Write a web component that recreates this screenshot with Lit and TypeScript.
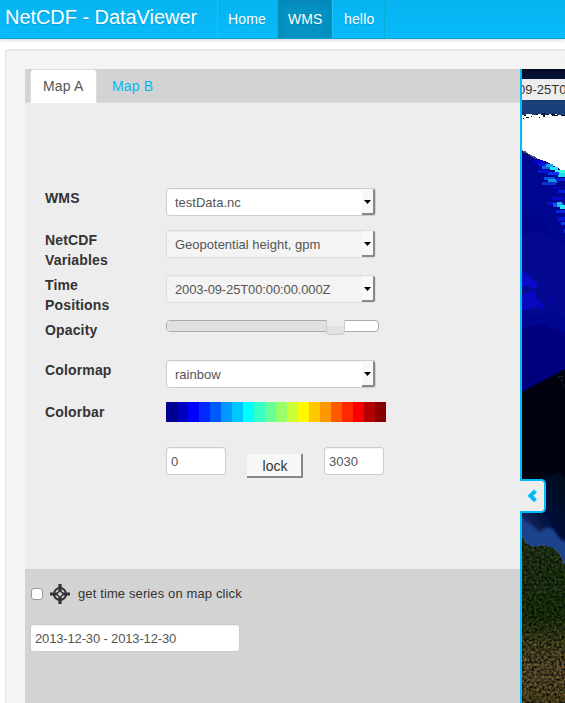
import { LitElement, html, css, svg } from "lit";
import { customElement } from "lit/decorators.js";
import { styleMap } from "lit/directives/style-map.js";

const RAINBOW = [
  "#00008f", "#0000bf", "#0000ff", "#0028ff", "#0058ff", "#0098ff", "#00c8ff",
  "#00ffff", "#38ffc8", "#68ff98", "#98ff68", "#c8ff38", "#fff800", "#ffc800",
  "#ff9800", "#ff5800", "#ff2800", "#f80000", "#b00000", "#880000",
];

@customElement("map-view")
class MapView extends LitElement {
  static styles = css`
    :host { display: block; position: relative; overflow: hidden; background: #00008b; }
    svg { display: block; }
    .time {
      position: absolute; top: 10px; left: 0; width: 100%; height: 21px;
      background: #ededed; color: #333; font-size: 13px; line-height: 21px;
      white-space: nowrap; overflow: hidden;
    }
    .time span { margin-left: -4px; }
  `;

  render() {
    // [x, y, width, height, colour] of the coloured data cells
    const cells: [number, number, number, number, string][] = [
      [12, 91, 9, 3, "#0505c8"], [16, 94, 10, 3, "#0718e8"], [20, 97, 9, 3, "#1262ee"],
      [24, 95, 7, 3, "#1ba9ef"], [28, 98, 8, 3, "#20e8ee"], [33, 101, 10, 3, "#35f8dd"],
      [36, 104, 7, 4, "#24d8ee"], [16, 101, 10, 3, "#0712d8"], [26, 103, 11, 3, "#0735f2"],
      [22, 108, 11, 3, "#0c50df"], [26, 110, 9, 4, "#1593e5"], [34, 109, 9, 3, "#0620da"],
      [20, 113, 14, 3, "#0a35d0"], [30, 118, 10, 2, "#0408bd"], [36, 121, 7, 3, "#061be1"],
      [29, 128, 13, 3, "#040cc4"], [25, 133, 8, 3, "#0512c8"], [31, 134, 11, 4, "#0d58de"],
      [35, 133, 5, 5, "#20b7ef"], [38, 136, 5, 4, "#29e1ef"], [34, 141, 9, 3, "#0825de"],
      [36, 148, 7, 4, "#0711d6"], [39, 153, 4, 3, "#0638ef"], [41, 160, 2, 4, "#0518ce"],
    ];
    return html`
      <svg width="43" height="634" viewBox="0 0 43 634">
        <defs>
          <linearGradient id="strip" x2="0" y2="1">
            <stop offset="0" stop-color="#020a25" />
            <stop offset=".3" stop-color="#071a42" />
            <stop offset=".72" stop-color="#1b427c" />
            <stop offset="1" stop-color="#1a3b78" />
          </linearGradient>
          <linearGradient id="sea" x1="1" y1="0" x2="0" y2="1">
            <stop offset="0" stop-color="#01040f" />
            <stop offset=".5" stop-color="#04113c" />
            <stop offset="1" stop-color="#123a80" />
          </linearGradient>
          <linearGradient id="land" x2="0" y2="1">
            <stop offset="0" stop-color="#1c2c14" />
            <stop offset=".48" stop-color="#14260a" />
            <stop offset=".65" stop-color="#34341a" />
            <stop offset=".8" stop-color="#473b24" />
            <stop offset="1" stop-color="#3b351b" />
          </linearGradient>
          <filter id="grain" x="0" y="0" width="1" height="1" color-interpolation-filters="sRGB">
            <feTurbulence type="fractalNoise" baseFrequency=".4" numOctaves="3" seed="8" result="n" />
            <feColorMatrix in="n" values="1.6 0 0 0 -.3  1.3 .2 0 0 -.26  1.2 0 .3 0 -.29  0 0 0 0 1" result="g" />
            <feBlend in="g" in2="SourceGraphic" mode="overlay" result="b" />
            <feComposite in="b" in2="SourceGraphic" operator="in" />
          </filter>
          <filter id="soft"><feGaussianBlur stdDeviation="1.5" /></filter>
        </defs>
        <rect width="43" height="48" fill="url(#strip)" />
        <g shape-rendering="crispEdges">
          <path d="M0 46h4v-1h6v1h5v-1h7v1h4v-1h9v1h8v60H0z" fill="#fff" />
          <path d="M2 46h2v1h-2zM4 48h3v1h-3zM1 49h1v1h-1zM9 47h1v1h-1zM14 45h2v1h-2zM20 44h3v4h-2v-2h-2zM25 45h2v1h-2zM29 45h4v1h3v1h-6zM38 46h5v1h-4zM17 48h1v1h-1z" fill="#061020" />
          <path d="M0 82 L5 84 L14 89 L25 93 L43 103 V323 H0z" fill="#000690" />
          <path d="M0 82v-1l5 2v2l9 3v2l-6-3z" fill="#4b5b63" />
          <path d="M0 140 20 150 30 168 43 171 V200 H0z" fill="#00048a" />
          <path d="M0 166 18 162 43 176 V248 L27 242 14 247 0 240z" fill="#050990" />
          <path d="M0 259 22 255 43 265 V323 H0z" fill="#00007e" />
          ${cells.map(([x, y, w, h, fill]) => svg`<rect x=${x} y=${y} width=${w} height=${h} fill=${fill} />`)}
          <path d="M0 203 6 205 8 209 14 212 16 218 12 220 6 217 0 218z" fill="#0909c6" />
          <path d="M0 226 8 222 14 222 13 228 19 233 23 239 12 238 7 240 0 241z" fill="#0808c2" />
          <path d="M26 227 33 230 36 235 29 233z" fill="#0505a8" />
        </g>
        <path d="M0 323 43 300V440H0z" fill="#00030f" />
        <path d="M36 307h5v1h-3v1h-2zM39 310h2v2h-1v2h-1zM41 315h1v3h-1z" fill="#19283c" opacity=".7" />
        <path d="M-4 416 47 400V484H-4z" fill="url(#sea)" filter="url(#soft)" />
        <path d="M-4 445 8 455 18 463 25 458 31 460 38 470 47 474V500H-4z" fill="#1a438b" filter="url(#soft)" />
        <path d="M0 467 4 474 11 478 20 476 32 479 38 486 43 496V634H0z" fill="url(#land)" filter="url(#grain)" />
        <path d="M0 528 12 524 28 521 43 516" fill="none" stroke="#45502a" stroke-width="1" opacity=".4" />
      </svg>
      <div class="time"><span>09-25T00:00:00.000Z</span></div>
    `;
  }
}

@customElement("app-root")
class AppRoot extends LitElement {
  static styles = css`
    :host {
      display: block; height: 703px; overflow: hidden; background: #fff; color: #333;
      font: 14px/20px "Liberation Sans", Arial, sans-serif;
    }
    * { box-sizing: border-box; }
    .navbar {
      position: relative; display: flex; height: 39px; color: #fff;
      background: linear-gradient(#05b3f0, #09bbf9); border-bottom: 1px solid #079fd5;
      box-shadow: 0 1px 4px rgba(0, 0, 0, .18); text-shadow: 0 1px 1px rgba(0, 0, 0, .15);
    }
    .brand { width: 217px; padding: 7px 0 0 5px; font-size: 20px; letter-spacing: -.05px; white-space: nowrap; }
    .nav { height: 38px; padding: 9px 0 0 10px; border-left: 1px solid #1dc0f8; border-right: 1px solid #08add9; letter-spacing: .15px; }
    .home { width: 61px; }
    .wms { width: 54px; padding-left: 9px; letter-spacing: 0; background: #0593c3; border-color: #0593c3; box-shadow: inset 0 3px 8px rgba(0, 0, 0, .1); }
    .hello { width: 53px; padding-left: 11px; }
    .well {
      display: flex; height: 680px; margin: 10px 0 0 5px; padding: 19px 0 0 19px;
      border: 1px solid #e3e3e3; border-right: 0; border-radius: 4px 0 0 0;
      background: #f4f4f4; box-shadow: inset 0 1px 1px rgba(0, 0, 0, .05);
    }
    .panel { position: relative; flex: 0 0 497px; border-right: 2px solid #00bbfa; background: #ededed; }
    map-view { flex: 1; }
    .tabs { display: flex; height: 34px; padding-left: 5px; background: #d3d3d3; border-bottom: 1px solid #ddd; }
    .tab { width: 67px; height: 34px; padding: 6px 0 0 12px; color: #00b9f2; border: 1px solid transparent; border-radius: 4px 4px 0 0; letter-spacing: .15px; }
    .tab.on { color: #555; background: #fff; border-color: #ddd #ddd #fff; }
    .tab.other { margin-left: 2px; }
    .form {
      display: grid; height: 466px; padding: 85px 0 0 20px;
      grid-template-columns: 90px 1fr; column-gap: 31px;
      grid-template-rows: 42px 45px 45px 40px 42px 45px 28px;
    }
    .label { font-weight: bold; letter-spacing: .15px; }
    .field {
      display: flex; height: 28px; border: 1px solid #ccc; border-radius: 3px; background: #fff;
      color: #555; font-size: 13px; line-height: 28px; padding-left: 4px; white-space: nowrap;
      box-shadow: inset 0 1px 1px rgba(0, 0, 0, .05);
    }
    .select { width: 210px; padding-left: 8px; justify-content: space-between; }
    .select.off { background: #f4f4f4; border-color: #ddd; }
    .tight { letter-spacing: -.12px; }
    .arrow {
      display: flex; align-items: center; justify-content: center; width: 13px; height: 26px;
      padding-top: 1px;
      background: #f8f8f7; border: solid #888; border-width: 0 2px 2px 0; border-radius: 0 2px 2px 0;
    }
    .arrow svg { display: block; }
    .slider {
      position: relative; width: 213px; height: 12px; border: 1px solid #aaa;
      border-radius: 4px; background: #fff;
    }
    .fill { width: 161px; height: 10px; border-radius: 3px 0 0 3px; background: #e1e1e1; }
    .thumb {
      position: absolute; left: 159px; top: -1px; width: 19px; height: 15px;
      border: 1px solid #ccc; border-top: 0; border-radius: 0 0 4px 4px;
      background: linear-gradient(#ededed 6px, #e2e2e2 6px);
    }
    .colorbar { display: flex; width: 220px; height: 20px; }
    .swatch { flex: 1; }
    .range { display: flex; }
    .num { width: 60px; }
    .lock {
      width: 56px; height: 24px; margin: 7px 21px 0; padding-left: 2px; text-align: center; line-height: 24px;
      background: #f8f8f7; border: solid #888; border-width: 0 2px 2px 0;
    }
    .foot { height: 134px; padding: 15px 0 0 5px; background: #d3d3d3; }
    .check { display: flex; align-items: center; height: 20px; font-size: 13px; letter-spacing: .12px; }
    .box { width: 12px; height: 12px; margin: 0 7px 0 1px; background: #fff; border: 1px solid #999; border-radius: 3px; }
    .target { margin-right: 8px; }
    .date { width: 210px; margin-top: 20px; letter-spacing: -.15px; }
    .toggle {
      position: absolute; left: 495px; top: 410px; width: 26px; height: 34px;
      display: flex; align-items: center; padding-left: 7px; z-index: 2;
      background: #ededed; border: 2px solid #00bbfa; border-left: 0; border-radius: 0 5px 5px 0;
    }
  `;

  private select(text: string, off = false, tight = false) {
    return html`<div class="field select ${off ? "off" : ""}">
      <span class=${tight ? "tight" : ""}>${text}</span>
      <span class="arrow"><svg width="7" height="4"><path d="M0 0H7L3.5 4z" fill="#000" /></svg></span>
    </div>`;
  }

  render() {
    return html`
      <nav class="navbar">
        <div class="brand">NetCDF - DataViewer</div>
        <div class="nav home">Home</div>
        <div class="nav wms">WMS</div>
        <div class="nav hello">hello</div>
      </nav>
      <main class="well">
        <section class="panel">
          <div class="tabs">
            <div class="tab on">Map A</div>
            <div class="tab other">Map B</div>
          </div>
          <div class="form">
            <div class="label">WMS</div>${this.select("testData.nc")}
            <div class="label">NetCDF Variables</div>${this.select("Geopotential height, gpm", true)}
            <div class="label">Time Positions</div>${this.select("2003-09-25T00:00:00.000Z", true, true)}
            <div class="label">Opacity</div>
            <div class="slider"><div class="fill"></div><div class="thumb"></div></div>
            <div class="label">Colormap</div>${this.select("rainbow")}
            <div class="label">Colorbar</div>
            <div class="colorbar">
              ${RAINBOW.map((c) => html`<div class="swatch" style=${styleMap({ background: c })}></div>`)}
            </div>
            <div></div>
            <div class="range">
              <div class="field num">0</div>
              <div class="lock">lock</div>
              <div class="field num">3030</div>
            </div>
          </div>
          <div class="foot">
            <div class="check">
              <span class="box"></span>
              <svg class="target" width="20" height="20" viewBox="0 0 20 20" fill="none" stroke="#333">
                <circle cx="10" cy="10" r="6" stroke-width="2" />
                <path d="M10 0V7M10 13V20M0 10H7M13 10H20" stroke-width="3.2" />
                <path d="M10 6.5 13.5 10 10 13.5 6.5 10z" stroke-width="1.5" />
              </svg>
              <span>get time series on map click</span>
            </div>
            <div class="field date">2013-12-30 - 2013-12-30</div>
          </div>
          <div class="toggle">
            <svg width="11" height="14" viewBox="0 0 11 14"><path d="M8.5 1.9 3.4 6.8 8.5 11.7" fill="none" stroke="#00bbfa" stroke-width="4" /></svg>
          </div>
        </section>
        <map-view></map-view>
      </main>
    `;
  }
}
